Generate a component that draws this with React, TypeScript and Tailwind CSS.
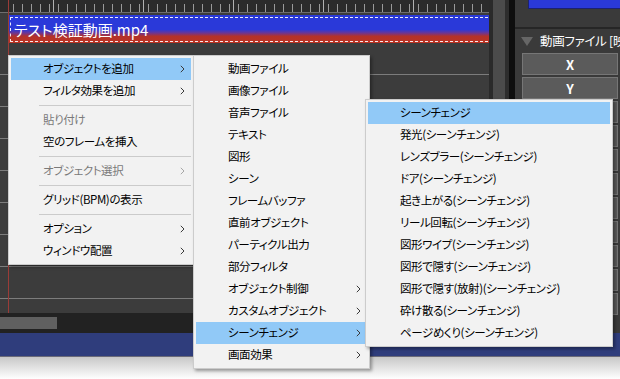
import React from 'react';

type Item = { label?: string; sub?: boolean; off?: boolean; on?: boolean; sep?: boolean };

const mainMenu: Item[] = [
  { label: 'オブジェクトを追加', sub: true, on: true },
  { label: 'フィルタ効果を追加', sub: true },
  { sep: true },
  { label: '貼り付け', off: true },
  { label: '空のフレームを挿入' },
  { sep: true },
  { label: 'オブジェクト選択', sub: true, off: true },
  { sep: true },
  { label: 'グリッド(BPM)の表示' },
  { sep: true },
  { label: 'オプション', sub: true },
  { label: 'ウィンドウ配置', sub: true },
];

const addMenu: Item[] = [
  { label: '動画ファイル' },
  { label: '画像ファイル' },
  { label: '音声ファイル' },
  { label: 'テキスト' },
  { label: '図形' },
  { label: 'シーン' },
  { label: 'フレームバッファ' },
  { label: '直前オブジェクト' },
  { label: 'パーティクル出力' },
  { label: '部分フィルタ' },
  { label: 'オブジェクト制御', sub: true },
  { label: 'カスタムオブジェクト', sub: true },
  { label: 'シーンチェンジ', sub: true, on: true },
  { label: '画面効果', sub: true },
];

const sceneMenu: Item[] = [
  { label: 'シーンチェンジ', on: true },
  { label: '発光(シーンチェンジ)' },
  { label: 'レンズブラー(シーンチェンジ)' },
  { label: 'ドア(シーンチェンジ)' },
  { label: '起き上がる(シーンチェンジ)' },
  { label: 'リール回転(シーンチェンジ)' },
  { label: '図形ワイプ(シーンチェンジ)' },
  { label: '図形で隠す(シーンチェンジ)' },
  { label: '図形で隠す(放射)(シーンチェンジ)' },
  { label: '砕け散る(シーンチェンジ)' },
  { label: 'ページめくり(シーンチェンジ)' },
];

// only X and Y are visible, the rest sit behind the open menu
const params = ['X', 'Y', '', '', '', '', '', '', '', '', ''];

function Chevron({ off }: { off?: boolean }) {
  return (
    <svg width="5" height="8" viewBox="0 0 5 8" className="ml-auto mr-[6px] shrink-0">
      <path d="M0.8 0.8 L4 4 L0.8 7.2" fill="none" stroke={off ? '#a6a6a6' : '#3a3a3a'} strokeWidth="1" />
    </svg>
  );
}

function Menu({ items, className }: { items: Item[]; className: string }) {
  return (
    <div className={`absolute border border-[#cccccc] bg-[#f2f2f2] p-[2px] shadow-[2px_2px_3px_rgba(0,0,0,0.35)] ${className}`}>
      {items.map((it, i) =>
        it.sep ? (
          <div key={i} className="h-[7px] flex items-center pl-[28px]">
            <div className="h-px w-full bg-[#cbcbcb]" />
          </div>
        ) : (
          <div
            key={i}
            className={`h-[22px] flex items-center pl-[32px] text-[11.5px] tracking-[-0.4px] leading-none whitespace-nowrap ${it.on ? 'bg-[#91c9f7]' : ''} ${it.off ? 'text-[#7a7a7a]' : 'text-black'}`}
          >
            <span>{it.label}</span>
            {it.sub && <Chevron off={it.off} />}
          </div>
        )
      )}
    </div>
  );
}

function Ruler() {
  const ticks = [];
  for (let x = 13; x < 489; x += 9) ticks.push(<line key={x} x1={x + 0.5} y1="4" x2={x + 0.5} y2="12" stroke="#9a9a9a" strokeWidth="1" />);
  for (let x = 53; x < 489; x += 90) ticks.push(<line key={'t' + x} x1={x + 0.5} y1="0" x2={x + 0.5} y2="12" stroke="#b0b0b0" strokeWidth="1" />);
  return (
    <div className="h-[13px] bg-[#2b2b2b] border-b border-[#6e6e6e]">
      <svg width="489" height="12">{ticks}</svg>
    </div>
  );
}

function Timeline() {
  return (
    <div className="relative w-[489px] flex flex-col bg-[#3c3c3c]">
      <Ruler />
      <div className="h-[30px] pt-[2px] pl-[8px] overflow-hidden">
        <div className="h-[28px] w-[520px] bg-[linear-gradient(to_bottom,#2a39d9_0%,#2a39d9_52%,#6a3596_64%,#b3322a_76%,#bd3322_100%)] pt-[2px] pl-[2px] pb-px">
          <div className="h-full border-dashed border-l border-y border-white/90 flex items-center pl-[3px]">
            <span className="text-[15px] leading-none text-white">テスト検証動画.mp4</span>
          </div>
        </div>
      </div>
      {[0, 1, 2, 3, 4, 5, 6, 7].map(i => (
        <div key={i} className="h-[32px] border-b border-[#7c7c7c]" />
      ))}
      <div className="h-[14px]" />
      <div className="h-[20px] bg-[#222222] flex items-center">
        <div className="h-[12px] w-[57px] bg-[#606060]" />
      </div>
      <div className="absolute left-[8px] top-0 h-[313px] w-px bg-[#9a3c38]" />
    </div>
  );
}

function Panel() {
  return (
    <div className="flex-1 min-w-0 bg-[#3a3a3a] flex flex-col overflow-hidden">
      <div className="h-[27px] pl-[13px]">
        <div className="h-[9px] bg-[#2a39d9] border-b border-l border-[#1c2270]" />
      </div>
      <div className="h-[2px] bg-[#262626]" />
      <div className="h-[24px] flex items-center pl-[6px] gap-[7px] whitespace-nowrap overflow-hidden">
        <svg width="12" height="9" viewBox="0 0 12 9" className="shrink-0"><path d="M0 0 H12 L6 9 Z" fill="#666666" /></svg>
        <span className="text-[12.5px] tracking-[-0.3px] leading-none text-white shrink-0">動画ファイル [映</span>
      </div>
      <div className="flex flex-col gap-[2px] pl-[7px]">
        {params.map((p, i) => (
          <div key={i} className="h-[22px] w-[96px] shrink-0 bg-[#5b5b5b] border border-[#767676] flex items-center justify-center text-[13px] font-bold text-white leading-none">
            {p}
          </div>
        ))}
      </div>
    </div>
  );
}

export default function App() {
  return (
    <div className="relative w-[620px] h-[379px] overflow-hidden bg-white font-['Noto_Sans_CJK_JP',sans-serif] [font-feature-settings:'palt']">
      <div className="flex h-[333px]">
        <Timeline />
        <div className="w-[26px] flex shrink-0">
          <div className="w-[4px] bg-[#2a2a2a]" />
          <div className="w-[12px] bg-[#4b4b4b]" />
          <div className="w-[4px] bg-[#2d2d2d]" />
          <div className="w-[6px] bg-[#0e0e0e]" />
        </div>
        <Panel />
      </div>
      <div className="h-[24px] bg-[#2f3d7c] border-b border-[#6a6a78]" />
      <div className="h-[22px] bg-gradient-to-b from-[#c8c8c8] to-white" />

      <Menu items={mainMenu} className="left-[8px] top-[55px] w-[186px]" />
      <Menu items={addMenu} className="left-[193px] top-[55px] w-[177px]" />
      <Menu items={sceneMenu} className="left-[365px] top-[99px] w-[248px]" />
    </div>
  );
}
